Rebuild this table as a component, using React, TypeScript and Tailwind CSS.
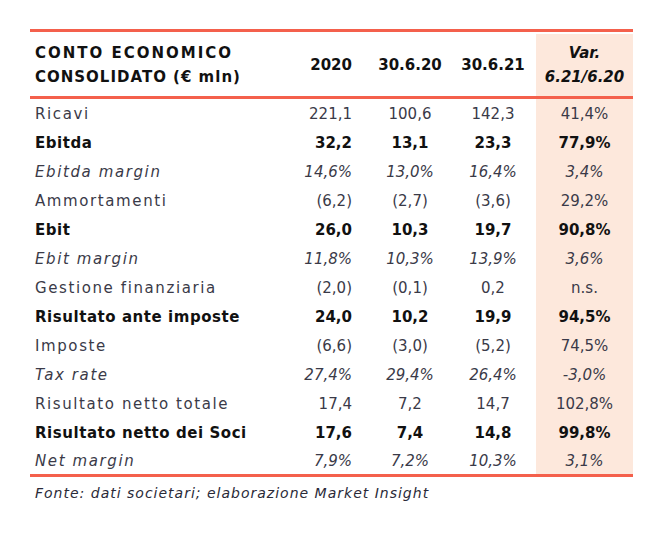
import React from "react";

type Row = { label: string; v: [string, string, string, string]; style: "n" | "b" | "i"; h?: string };

const rows: Row[] = [
  { label: "Ricavi", v: ["221,1", "100,6", "142,3", "41,4%"], style: "n" },
  { label: "Ebitda", v: ["32,2", "13,1", "23,3", "77,9%"], style: "b" },
  { label: "Ebitda margin", v: ["14,6%", "13,0%", "16,4%", "3,4%"], style: "i" },
  { label: "Ammortamenti", v: ["(6,2)", "(2,7)", "(3,6)", "29,2%"], style: "n" },
  { label: "Ebit", v: ["26,0", "10,3", "19,7", "90,8%"], style: "b" },
  { label: "Ebit margin", v: ["11,8%", "10,3%", "13,9%", "3,6%"], style: "i" },
  { label: "Gestione finanziaria", v: ["(2,0)", "(0,1)", "0,2", "n.s."], style: "n" },
  { label: "Risultato ante imposte", v: ["24,0", "10,2", "19,9", "94,5%"], style: "b" },
  { label: "Imposte", v: ["(6,6)", "(3,0)", "(5,2)", "74,5%"], style: "n" },
  { label: "Tax rate", v: ["27,4%", "29,4%", "26,4%", "-3,0%"], style: "i" },
  { label: "Risultato netto totale", v: ["17,4", "7,2", "14,7", "102,8%"], style: "n" },
  { label: "Risultato netto dei Soci", v: ["17,6", "7,4", "14,8", "99,8%"], style: "b" },
  { label: "Net margin", v: ["7,9%", "7,2%", "10,3%", "3,1%"], style: "i", h: "h-[27px]" },
];

const styleCls = (s: Row["style"]) =>
  s === "b" ? "font-bold text-[#111111]" : s === "i" ? "italic text-[#3a3a48]" : "text-[#3a3a48]";

const labelTrack = (s: Row["style"]) => (s === "b" ? "tracking-[0.55px]" : "tracking-[1.6px]");

export default function App() {
  return (
    <div className="w-[661px] h-[536px] bg-white pt-[29px] pl-[30px] font-['DejaVu_Sans',sans-serif] text-[15px]">
      <div className="w-[603px]">
        <div className="h-[3px] bg-[#f4604c]" />
        <div className="grid grid-cols-[262px_78px_80px_86px_97px] h-[64px] font-bold text-[#111111]">
          <div className="pl-[5px] pt-[2px] flex flex-col justify-center leading-[24px]">
            <span className="tracking-[2px]">CONTO ECONOMICO</span>
            <span className="tracking-[1px]">CONSOLIDATO (€ mln)</span>
          </div>
          <div className="flex items-center justify-end pr-[18px] pt-[2px]">2020</div>
          <div className="flex items-center justify-center pt-[2px]">30.6.20</div>
          <div className="flex items-center justify-center pt-[2px]">30.6.21</div>
          <div className="mt-[2px] bg-[#fde8dc] flex flex-col items-center justify-center leading-[24px] italic">
            <span>Var.</span>
            <span>6.21/6.20</span>
          </div>
        </div>
        <div className="h-[3px] bg-[#f4604c]" />
        {rows.map((r) => (
          <div
            key={r.label}
            className={`grid grid-cols-[262px_78px_80px_86px_97px] ${r.h ?? "h-[29px]"} ${styleCls(r.style)}`}
          >
            <div className={`pl-[5px] pt-[2px] flex items-center whitespace-nowrap ${labelTrack(r.style)}`}>{r.label}</div>
            <div className="flex items-center justify-end pr-[18px] pt-[2px]">{r.v[0]}</div>
            <div className="flex items-center justify-center pt-[2px]">{r.v[1]}</div>
            <div className="flex items-center justify-center pt-[2px]">{r.v[2]}</div>
            <div className="flex items-center justify-center bg-[#fde8dc] pt-[2px]">{r.v[3]}</div>
          </div>
        ))}
        <div className="h-[3px] bg-[#f4604c]" />
        <div className="pl-[5px] pt-[6px] italic text-[14px] tracking-[1px] text-[#2a2a38] whitespace-nowrap">
          Fonte: dati societari; elaborazione Market Insight
        </div>
      </div>
    </div>
  );
}
